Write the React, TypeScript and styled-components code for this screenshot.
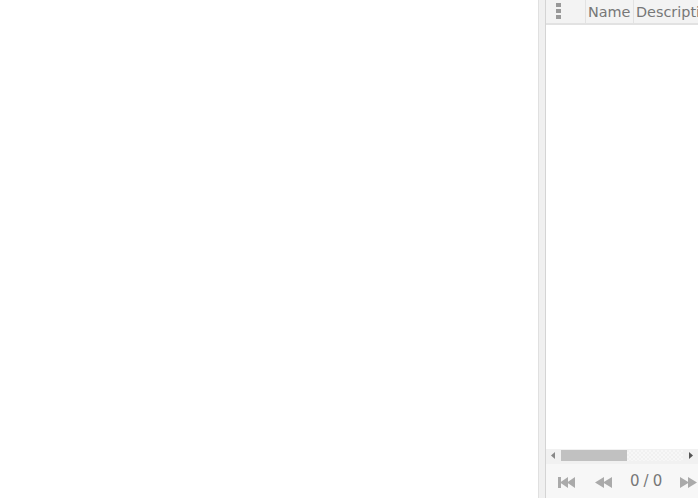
import React from 'react'
import styled, { createGlobalStyle } from 'styled-components'

const GlobalStyle = createGlobalStyle`
  html, body {
    margin: 0;
    padding: 0;
    background: #fff;
    overflow: hidden;
  }
`

const Page = styled.div`
  width: 700px;
  height: 500px;
  display: flex;
  font-family: 'DejaVu Sans', sans-serif;
  color: #777;
`

const MainArea = styled.div`
  width: 538px;
  height: 498px;
`

const Splitter = styled.div`
  width: 8px;
  height: 498px;
  box-sizing: border-box;
  background: #f0f0f0;
  border-left: 1px solid #e0e0e0;
  border-right: 1px solid #d4d4d4;
`

const Side = styled.div`
  width: 152px;
  height: 498px;
  display: flex;
  flex-direction: column;
  overflow: hidden;
`

const Header = styled.div`
  height: 25px;
  flex: none;
  box-sizing: border-box;
  display: flex;
  background: #f3f3f3;
  border-bottom: 2px solid #e2e2e2;
`

const MenuCell = styled.div`
  width: 40px;
  flex: none;
  box-sizing: border-box;
  border-right: 1px solid #e2e2e2;
  display: flex;
  flex-direction: column;
  gap: 2px;
  padding: 3px 0 0 10px;
`

const Dot = styled.span`
  width: 5px;
  height: 4px;
  background: #999;
`

const HeaderCell = styled.div<{ $width: number }>`
  width: ${({ $width }) => $width}px;
  flex: none;
  box-sizing: border-box;
  padding-left: 2px;
  border-right: 1px solid #e2e2e2;
  font-size: 14.4px;
  line-height: 24px;
  white-space: nowrap;
`

const Body = styled.div`
  flex: 1;
`

const ScrollBar = styled.div`
  height: 15px;
  flex: none;
  box-sizing: border-box;
  display: flex;
  align-items: center;
  background: #f1f1f1;
  padding: 0 5px 2px;
`

const ScrollTrack = styled.div`
  flex: 1;
  height: 11px;
  margin: 0 6px;
  background-image: repeating-conic-gradient(#f1f1f1 0 25%, #f7f7f7 0 50%);
  background-size: 4px 4px;
`

const ScrollThumb = styled.div`
  width: 66px;
  height: 100%;
  background: #c1c1c1;
`

const Pager = styled.div`
  height: 34px;
  flex: none;
  display: flex;
  align-items: center;
  background: #f7f7f7;
  padding-left: 12px;
`

const PagerButton = styled.svg<{ $gap?: number }>`
  width: 17px;
  height: 11px;
  flex: none;
  fill: #aaa;
  margin-top: 3px;
  margin-left: ${({ $gap }) => $gap || 0}px;
`

const PagerCount = styled.span`
  width: 68px;
  margin-bottom: 1px;
  text-align: center;
  font-size: 15px;
  letter-spacing: -0.3px;
`

const App = () => (
  <Page>
    <GlobalStyle />
    <MainArea />
    <Splitter />
    <Side>
      <Header>
        <MenuCell>
          <Dot />
          <Dot />
          <Dot />
        </MenuCell>
        <HeaderCell $width={48}>Name</HeaderCell>
        <HeaderCell $width={90}>Description</HeaderCell>
      </Header>
      <Body />
      <ScrollBar>
        <svg width="4" height="7" viewBox="0 0 4 7">
          <path d="M4 0v7L0 3.5z" fill="#888" />
        </svg>
        <ScrollTrack>
          <ScrollThumb />
        </ScrollTrack>
        <svg width="4" height="7" viewBox="0 0 4 7">
          <path d="M0 0v7l4-3.5z" fill="#555" />
        </svg>
      </ScrollBar>
      <Pager>
        <PagerButton viewBox="0 0 17 11">
          <path d="M0 0h3v11H0zM2 5.5L10 0v11zM9 5.5L17 0v11z" />
        </PagerButton>
        <PagerButton viewBox="0 0 17 11" $gap={20}>
          <path d="M0 5.5L9 0v11zM8 5.5L17 0v11z" />
        </PagerButton>
        <PagerCount>0 / 0</PagerCount>
        <PagerButton viewBox="0 0 17 11">
          <path d="M0 0l9 5.5L0 11zM8 0l9 5.5L8 11z" />
        </PagerButton>
      </Pager>
    </Side>
  </Page>
)

export default App
